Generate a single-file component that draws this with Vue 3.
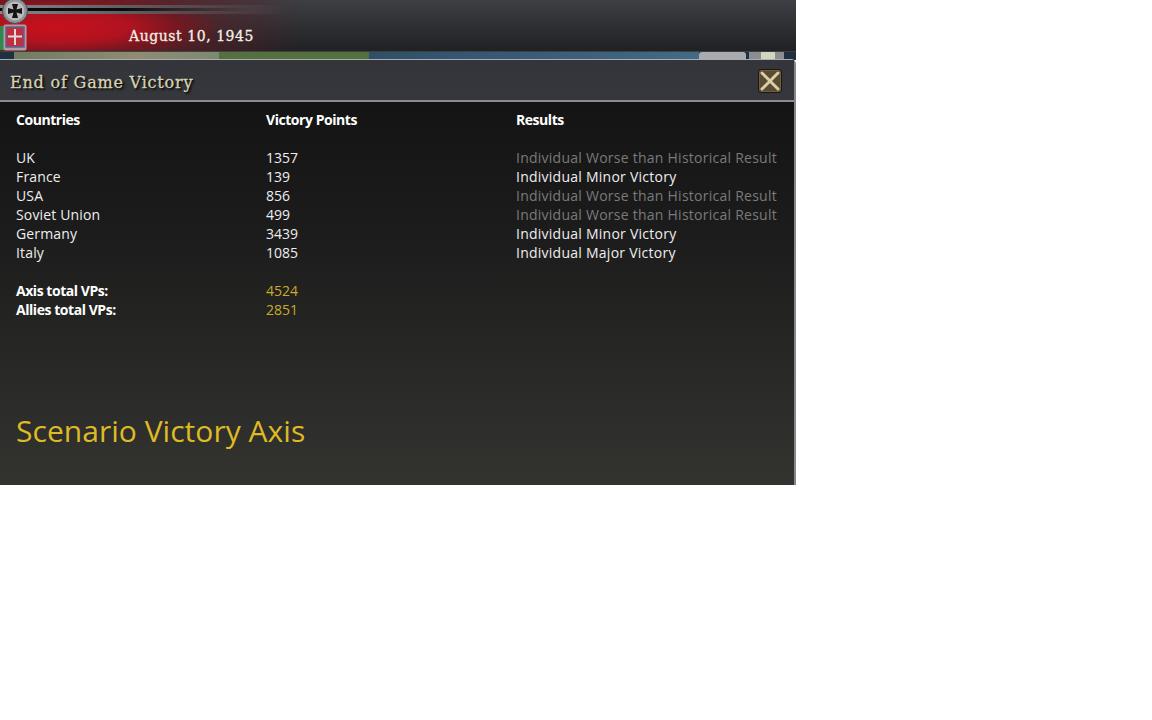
<script setup>
const rows = [
  { name: 'UK', vp: 1357, result: 'Individual Worse than Historical Result', dim: true },
  { name: 'France', vp: 139, result: 'Individual Minor Victory', dim: false },
  { name: 'USA', vp: 856, result: 'Individual Worse than Historical Result', dim: true },
  { name: 'Soviet Union', vp: 499, result: 'Individual Worse than Historical Result', dim: true },
  { name: 'Germany', vp: 3439, result: 'Individual Minor Victory', dim: false },
  { name: 'Italy', vp: 1085, result: 'Individual Major Victory', dim: false }
]
</script>

<template>
  <div class="game">
    <header class="topbar">
      <div class="ribbon"></div>
      <svg class="cross-badge" width="30" height="26" viewBox="0 0 30 26">
        <circle cx="15" cy="11" r="12.500" fill="#8f9296" stroke="#4a4c50" stroke-width="1" />
        <circle cx="15" cy="11" r="9.500" fill="#b9babb" />
        <path d="M13.500 9.500 12 4h6l-1.500 5.500L22 8v6l-5.500-1.500L18 18h-6l1.500-5.500L8 14V8z" fill="#141414" />
      </svg>
      <div class="green-edge"></div>
      <svg class="shield" width="24" height="27" viewBox="0 0 24 27">
        <rect x="0.500" y="0.500" width="23" height="26" rx="2" fill="#b79aa2" />
        <rect x="3" y="3" width="18" height="20" fill="#bd3040" stroke="#5a6296" stroke-width="1.500" />
        <path d="M12 5v16M5 12.500h14" stroke="#e6d8d6" stroke-width="2" />
      </svg>
      <span class="date">August 10, 1945</span>
    </header>

    <div class="map">
      <span class="land one"></span>
      <span class="land two"></span>
      <span class="sea"></span>
      <span class="chip"></span>
      <span class="mini"></span>
    </div>

    <section class="panel">
      <div class="titlebar">
        <h1>End of Game Victory</h1>
        <button class="close" aria-label="Close">
          <svg width="22" height="22" viewBox="0 0 22 22">
            <path d="M3 3 19 19M19 3 3 19" stroke="#d8cfa6" stroke-width="3" stroke-linecap="round" />
          </svg>
        </button>
      </div>

      <div class="body">
        <div class="grid">
          <strong>Countries</strong>
          <strong>Victory Points</strong>
          <strong>Results</strong>
          <div class="blank"></div>

          <template v-for="row in rows" :key="row.name">
            <span class="name">{{ row.name }}</span>
            <span>{{ row.vp }}</span>
            <span class="result" :class="{ dim: row.dim }">{{ row.result }}</span>
          </template>
          <div class="blank"></div>

          <strong>Axis total VPs:</strong>
          <span class="gold wide">4524</span>
          <strong>Allies total VPs:</strong>
          <span class="gold wide">2851</span>
        </div>
        <p class="verdict">Scenario Victory Axis</p>
      </div>
    </section>
  </div>
</template>

<style scoped>
.game {
  width: 796px;
  height: 485px;
  display: flex;
  flex-direction: column;
  position: relative;
  overflow: hidden;
  font-family: "Open Sans", sans-serif;
}
.topbar {
  height: 51px;
  flex: none;
  position: relative;
  background:
    radial-gradient(ellipse 165px 34px at 55px 27px, #c8101c 0%, #b0131f 45%, rgba(125, 20, 30, 0.65) 78%, rgba(70, 30, 35, 0) 100%),
    linear-gradient(90deg, rgba(120, 22, 32, 0.95) 0, rgba(92, 30, 38, 0.8) 170px, rgba(50, 40, 42, 0) 300px),
    linear-gradient(180deg, #3d3f44 0%, #2d2e31 55%, #202124 100%);
  border-bottom: 1px solid #3e4144;
}
.ribbon {
  position: absolute;
  left: 0;
  top: 5px;
  width: 290px;
  height: 9px;
  background: linear-gradient(90deg, #84878a 0, #5d5d60 45%, rgba(70, 60, 62, 0) 100%);
}
.ribbon::after {
  content: "";
  position: absolute;
  left: 0;
  width: 250px;
  top: 3px;
  height: 3px;
  background: linear-gradient(90deg, #0a0a0a 50%, rgba(10, 10, 10, 0));
}
.cross-badge {
  position: absolute;
  left: 0;
  top: 0;
}
.green-edge {
  position: absolute;
  left: 0;
  top: 26px;
  width: 4px;
  height: 24px;
  background: #2c8a4a;
}
.shield {
  position: absolute;
  left: 3px;
  top: 24px;
}
.date {
  position: absolute;
  left: 129px;
  top: 27px;
  color: #f2efe6;
  font-family: "DejaVu Serif", serif;
  font-size: 14px;
  line-height: 18px;
  letter-spacing: 0.55px;
  -webkit-text-stroke: 0.3px #f2efe6;
}
.map {
  height: 8px;
  flex: none;
  display: flex;
  background: #1f3040;
  position: relative;
}
.land {
  display: block;
  height: 100%;
}
.land.one {
  width: 205px;
  margin-left: 14px;
  background: linear-gradient(90deg, #6f7d62, #8f8c72 60%, #7c8a70);
}
.land.two {
  width: 150px;
  background: #54703f;
}
.sea {
  width: 330px;
  background: linear-gradient(90deg, #2f4f68, #446a86);
}
.chip {
  width: 47px;
  background: #a8acb0;
  border-radius: 3px 3px 0 0;
}
.mini {
  width: 35px;
  margin-left: 3px;
  background: linear-gradient(90deg, #8a8e92 0 12px, #cfd8bf 12px 26px, #8a8e92 26px);
}
.panel {
  flex: 1;
  display: flex;
  flex-direction: column;
  min-height: 0;
  margin-top: -1px;
  position: relative;
  border-top: 1px solid #a9adb2;
  border-right: 2px solid #85888b;
  border-top-right-radius: 5px;
}
.titlebar {
  height: 42px;
  flex: none;
  box-sizing: border-box;
  border-bottom: 2px solid #8b8c8c;
  display: flex;
  align-items: center;
  justify-content: space-between;
  padding: 2px 12px 0 10px;
  background: linear-gradient(180deg, #33353a 0%, #36373c 100%);
}
h1 {
  margin: 0;
  color: #d6d2b4;
  font-family: "DejaVu Serif", serif;
  font-size: 16px;
  font-weight: 400;
  line-height: 22px;
  letter-spacing: 0.8px;
  position: relative;
  top: 2px;
  -webkit-text-stroke: 0.3px #d6d2b4;
  text-shadow: 1px 1px 1px #0b0b0b, 2px 2px 2px #111;
}
.close {
  width: 24px;
  height: 24px;
  padding: 0;
  border: 1px solid #1b1610;
  border-radius: 3px;
  display: flex;
  align-items: center;
  justify-content: center;
  background: #5a4a33;
  box-shadow: inset 0 0 0 1px #6f5d42;
}
.body {
  flex: 1;
  min-height: 0;
  padding: 8px 0 0 16px;
  background: linear-gradient(180deg, #141414 0%, #1c1c1c 35%, #333330 100%);
}
.grid {
  display: grid;
  grid-template-columns: 250px 250px 1fr;
  grid-auto-rows: 19px;
  font-size: 14px;
  line-height: 19px;
  color: #eeeeee;
  white-space: nowrap;
}
.grid strong {
  font-weight: 700;
  color: #fff;
  letter-spacing: -0.45px;
}
.name {
  letter-spacing: 0.16px;
}
.result {
  letter-spacing: 0.25px;
}
.blank {
  grid-column: 1 / -1;
}
.dim {
  color: #7a7a7a;
}
.gold {
  color: #c8ab2c;
}
.wide {
  grid-column: 2 / -1;
}
.verdict {
  margin: 92px 0 0;
  color: #dfba24;
  font-size: 30px;
  line-height: 40px;
  letter-spacing: 0.03px;
}
</style>
